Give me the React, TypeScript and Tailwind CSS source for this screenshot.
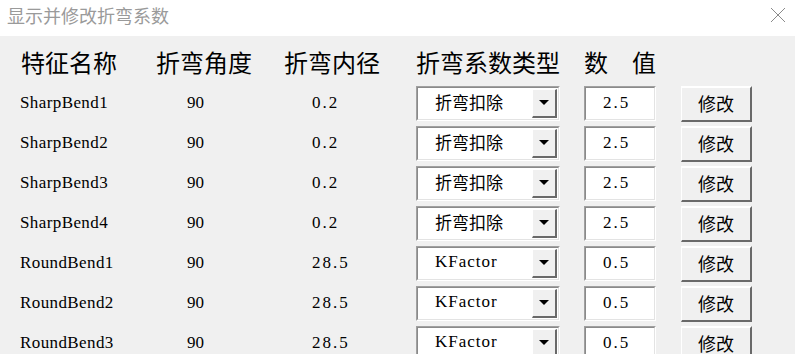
import React from "react";

const rows = [
  { name: "SharpBend1", angle: "90", radius: "0.2", type: "折弯扣除", value: "2.5" },
  { name: "SharpBend2", angle: "90", radius: "0.2", type: "折弯扣除", value: "2.5" },
  { name: "SharpBend3", angle: "90", radius: "0.2", type: "折弯扣除", value: "2.5" },
  { name: "SharpBend4", angle: "90", radius: "0.2", type: "折弯扣除", value: "2.5" },
  { name: "RoundBend1", angle: "90", radius: "28.5", type: "KFactor", value: "0.5" },
  { name: "RoundBend2", angle: "90", radius: "28.5", type: "KFactor", value: "0.5" },
  { name: "RoundBend3", angle: "90", radius: "28.5", type: "KFactor", value: "0.5" },
];

const serif = "font-['Liberation_Serif','Noto_Sans_CJK_SC',serif]";
const cjk = "font-['Noto_Sans_CJK_SC',sans-serif]";

function Sunken({ className, children }: { className: string; children: React.ReactNode }) {
  return (
    <div className={`border-t border-l border-t-[#a0a0a0] border-l-[#a0a0a0] border-b border-r border-b-white border-r-white ${className}`}>
      <div className="w-full h-full border-t border-l border-t-[#8a8a8a] border-l-[#8a8a8a] border-b border-r border-b-[#e3e3e3] border-r-[#e3e3e3] bg-white flex items-center">
        {children}
      </div>
    </div>
  );
}

function Arrow() {
  return (
    <svg width="10" height="5" viewBox="0 0 10 5">
      <polygon points="0,0 10,0 5,5" fill="#000" />
    </svg>
  );
}

export default function App() {
  return (
    <div className="w-[795px] h-[354px] overflow-hidden bg-[#f0f0f0] flex flex-col">
      {/* title bar */}
      <div className="h-[36px] shrink-0 bg-white flex items-center justify-between pl-[7px] pr-[9px]">
        <span className={`${cjk} text-[18px] leading-none text-[#9a9a9a] -mt-[7px]`}>显示并修改折弯系数</span>
        <svg width="16" height="16" viewBox="0 0 16 16" className="-mt-[7px]">
          <path d="M1 1 L15 15 M15 1 L1 15" stroke="#8a8a8a" strokeWidth="1" fill="none" />
        </svg>
      </div>

      {/* header */}
      <div className={`h-[47px] shrink-0 flex items-center pt-[5px] pl-[21px] ${cjk} text-[24px] leading-none text-black`}>
        <div className="w-[135px]">特征名称</div>
        <div className="w-[128px]">折弯角度</div>
        <div className="w-[132px]">折弯内径</div>
        <div className="w-[168px]">折弯系数类型</div>
        <div className="whitespace-pre">数　值</div>
      </div>

      {/* rows */}
      <div className="flex flex-col">
        {rows.map((r) => (
          <div key={r.name} className="h-[40px] shrink-0 flex items-center pl-[20px]">
            <div className={`w-[167px] ${serif} text-[17px] tracking-[0.4px] text-black`}>{r.name}</div>
            <div className={`w-[125px] ${serif} text-[17px] text-black`}>{r.angle}</div>
            <div className={`w-[104px] ${serif} text-[17px] tracking-[2px] text-black`}>{r.radius}</div>
            <div className="w-[168px]">
              <Sunken className="w-[144px] h-[35px]">
                <div
                  className={`flex-1 pl-[17px] text-[17px] text-black -mt-[3px] ${
                    r.type === "KFactor" ? `${serif} tracking-[1px]` : cjk
                  }`}
                >
                  {r.type}
                </div>
                <div className="w-[25px] h-[29px] mr-[1px] border-t border-l border-t-white border-l-white border-b-2 border-r-2 border-b-[#696969] border-r-[#696969] bg-[#f0f0f0] flex items-center justify-center">
                  <Arrow />
                </div>
              </Sunken>
            </div>
            <div className="w-[97px]">
              <Sunken className="w-[72px] h-[35px]">
                <div className={`pl-[17px] ${serif} text-[17px] tracking-[2px] text-black -mt-[1px]`}>{r.value}</div>
              </Sunken>
            </div>
            <button
              className={`w-[71px] h-[36px] mt-[1px] border-t-2 border-l border-t-white border-l-white border-b-2 border-r-2 border-b-[#696969] border-r-[#696969] bg-[#f0f0f0] flex items-center justify-center ${cjk} text-[18px] text-black`}
            >
              修改
            </button>
          </div>
        ))}
      </div>
    </div>
  );
}
